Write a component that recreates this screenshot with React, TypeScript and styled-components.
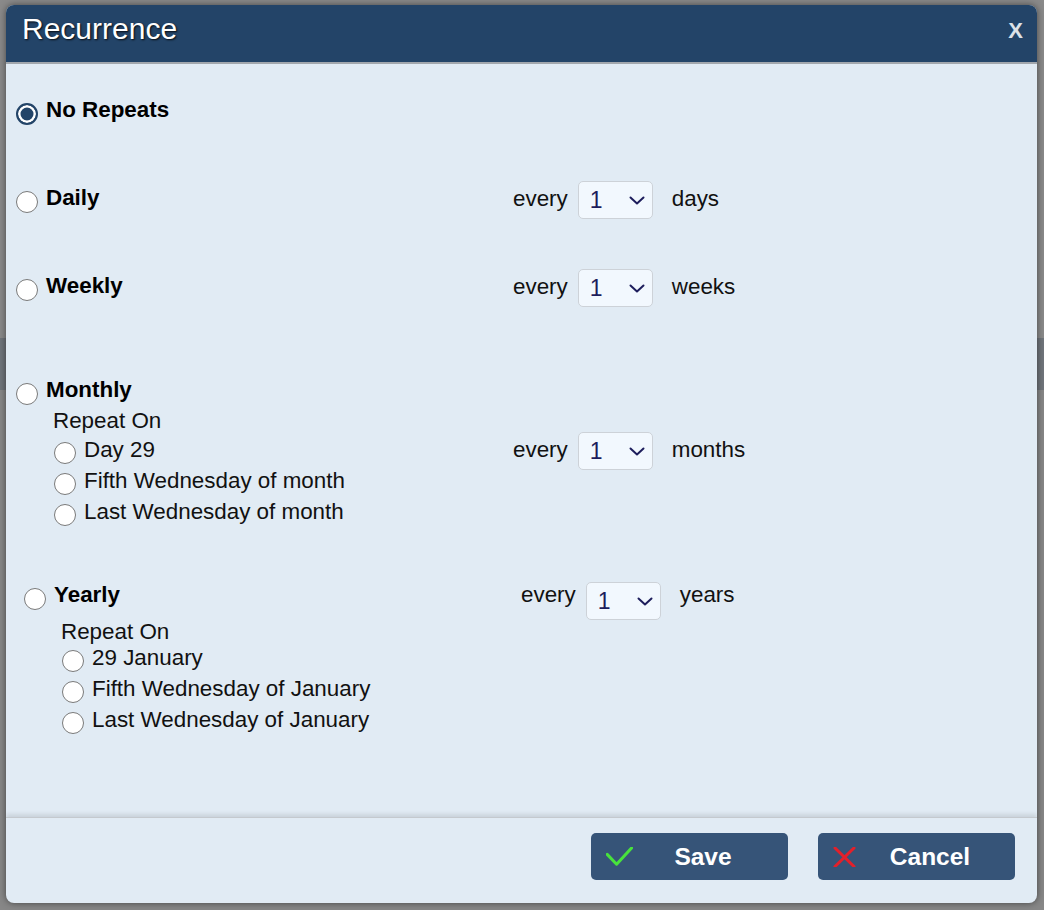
import React, { useState } from 'react';
import styled, { createGlobalStyle } from 'styled-components';

const GlobalStyle = createGlobalStyle`
  html, body {
    margin: 0;
    padding: 0;
  }
  body {
    font-family: 'Liberation Sans', Arial, sans-serif;
  }
`;

type Freq = 'none' | 'daily' | 'weekly' | 'monthly' | 'yearly';

const counts = Array.from({ length: 30 }, (_, i) => i + 1);

export default function App() {
  const [freq, setFreq] = useState<Freq>('none');
  const [monthRule, setMonthRule] = useState<string>('');
  const [yearRule, setYearRule] = useState<string>('');
  const [every, setEvery] = useState({ daily: 1, weekly: 1, monthly: 1, yearly: 1 });

  const setCount = (key: keyof typeof every) => (e: React.ChangeEvent<HTMLSelectElement>) => {
    setEvery({ ...every, [key]: Number(e.target.value) });
  };

  // "every [n] unit" block on the right of each option
  const EveryBox = (key: keyof typeof every, unit: string, top: number, word: number) => (
    <RightCol $top={top} $word={word}>
      <Word>every</Word>
      <SelectWrap>
        <CountSelect value={every[key]} onChange={setCount(key)}>
          {counts.map((n) => (
            <option key={n} value={n}>{n}</option>
          ))}
        </CountSelect>
        <Chevron width="16" height="9" viewBox="0 0 16 9">
          <path d="M1.5 1.5 L8 7.5 L14.5 1.5" fill="none" stroke="#1d1d5c" strokeWidth="2" strokeLinecap="round" strokeLinejoin="round" />
        </Chevron>
      </SelectWrap>
      <Word>{unit}</Word>
    </RightCol>
  );

  return (
    <>
      <GlobalStyle />
      <Backdrop>
        <Dialog>
          <Header>
            <Title>Recurrence</Title>
            <Close>X</Close>
          </Header>

          <Body>
            <Section $top={0} $indent={0}>
              <LeftCol>
                <OptionHead>
                  <Radio name="freq" checked={freq === 'none'} onChange={() => setFreq('none')} />
                  <HeadLabel>No Repeats</HeadLabel>
                </OptionHead>
              </LeftCol>
            </Section>

            <Section $top={62} $indent={0}>
              <LeftCol>
                <OptionHead>
                  <Radio name="freq" checked={freq === 'daily'} onChange={() => setFreq('daily')} />
                  <HeadLabel>Daily</HeadLabel>
                </OptionHead>
              </LeftCol>
              {EveryBox('daily', 'days', -4, 5)}
            </Section>

            <Section $top={62} $indent={0}>
              <LeftCol>
                <OptionHead>
                  <Radio name="freq" checked={freq === 'weekly'} onChange={() => setFreq('weekly')} />
                  <HeadLabel>Weekly</HeadLabel>
                </OptionHead>
              </LeftCol>
              {EveryBox('weekly', 'weeks', -4, 5)}
            </Section>

            <Section $top={78} $indent={0}>
              <LeftCol>
                <OptionHead>
                  <Radio name="freq" checked={freq === 'monthly'} onChange={() => setFreq('monthly')} />
                  <HeadLabel>Monthly</HeadLabel>
                </OptionHead>
                <RepeatLabel $top={5}>Repeat On</RepeatLabel>
                <SubList $top={0}>
                  {['Day 29', 'Fifth Wednesday of month', 'Last Wednesday of month'].map((t) => (
                    <SubRow key={t}>
                      <Radio name="month" checked={monthRule === t} onChange={() => setMonthRule(t)} />
                      <SubLabel>{t}</SubLabel>
                    </SubRow>
                  ))}
                </SubList>
              </LeftCol>
              {EveryBox('monthly', 'months', 55, 5)}
            </Section>

            <Section $top={55} $indent={8}>
              <LeftCol>
                <OptionHead>
                  <Radio name="freq" checked={freq === 'yearly'} onChange={() => setFreq('yearly')} />
                  <HeadLabel>Yearly</HeadLabel>
                </OptionHead>
                <RepeatLabel $top={11}>Repeat On</RepeatLabel>
                <SubList $top={-3}>
                  {['29 January', 'Fifth Wednesday of January', 'Last Wednesday of January'].map((t) => (
                    <SubRow key={t}>
                      <Radio name="year" checked={yearRule === t} onChange={() => setYearRule(t)} />
                      <SubLabel>{t}</SubLabel>
                    </SubRow>
                  ))}
                </SubList>
              </LeftCol>
              {EveryBox('yearly', 'years', 0, 0)}
            </Section>
          </Body>

          <Footer>
            <ActionButton>
              <IconBox>
                <svg width="27" height="20" viewBox="0 0 27 20">
                  <path d="M1.2 7.4 L10.6 17.2 L25.6 0.9" fill="none" stroke="#48e23c" strokeWidth="3" strokeLinecap="round" strokeLinejoin="round" />
                </svg>
              </IconBox>
              <ButtonText>Save</ButtonText>
            </ActionButton>
            <ActionButton>
              <IconBox>
                <svg width="27" height="20" viewBox="0 0 27 20">
                  <path d="M2 1 L21 19.5 M21 1 L2 19.5" fill="none" stroke="#e3202a" strokeWidth="3" strokeLinecap="round" />
                </svg>
              </IconBox>
              <ButtonText>Cancel</ButtonText>
            </ActionButton>
          </Footer>
        </Dialog>
      </Backdrop>
    </>
  );
}

const Backdrop = styled.div`
  width: 1044px;
  height: 910px;
  box-sizing: border-box;
  padding: 5px 7px 7px 6px;
  background: linear-gradient(
    to bottom,
    #8a8a8a 0,
    #8a8a8a 338px,
    #70757b 338px,
    #70757b 390px,
    #878787 390px
  );
`;

const Dialog = styled.div`
  height: 898px;
  display: flex;
  flex-direction: column;
  background: #e1ebf4;
  border-radius: 8px;
  overflow: hidden;
  box-shadow: 0 0 7px rgba(0, 0, 0, 0.5);
`;

const Header = styled.div`
  height: 59px;
  flex: none;
  display: flex;
  justify-content: space-between;
  align-items: flex-start;
  padding: 7px 14px 0 16px;
  box-sizing: border-box;
  background: #234468;
  border-bottom: 2px solid #a2a7ad;
`;

const Title = styled.div`
  font-size: 30px;
  color: #ffffff;
  text-shadow: 1px 1px 2px rgba(0, 0, 0, 0.85);
`;

const Close = styled.div`
  margin-top: 6px;
  font-size: 22px;
  font-weight: bold;
  color: #dce1e7;
  cursor: pointer;
`;

const Body = styled.div`
  flex: 1;
  padding: 33px 0 0 10px;
`;

const Section = styled.div<{ $top: number; $indent: number }>`
  display: grid;
  grid-template-columns: 497px auto;
  align-items: start;
  margin-top: ${(p) => p.$top}px;
  padding-left: ${(p) => p.$indent}px;
`;

const LeftCol = styled.div`
  display: flex;
  flex-direction: column;
`;

const OptionHead = styled.label`
  display: flex;
  align-items: flex-start;
  gap: 8px;
  height: 26px;
`;

const Radio = styled.input.attrs({ type: 'radio' })`
  appearance: none;
  -webkit-appearance: none;
  flex: none;
  width: 22px;
  height: 22px;
  margin: 6px 0 0 0;
  box-sizing: border-box;
  border-radius: 50%;
  border: 1.5px solid #7a7a7a;
  background: #ffffff;
  cursor: pointer;

  &:checked {
    border: 2px solid #234468;
    background: #234468;
    box-shadow: inset 0 0 0 2.5px #ffffff;
  }
`;

const HeadLabel = styled.span`
  font-size: 22.4px;
  line-height: 26px;
  font-weight: bold;
  color: #000000;
`;

const RepeatLabel = styled.div<{ $top: number }>`
  margin-top: ${(p) => p.$top}px;
  padding-left: 37px;
  font-size: 22.4px;
  line-height: 26px;
  color: #111111;
`;

const SubList = styled.div<{ $top: number }>`
  margin-top: ${(p) => p.$top}px;
  padding-left: 38px;
  display: flex;
  flex-direction: column;
`;

const SubRow = styled.label`
  display: flex;
  align-items: flex-start;
  gap: 8px;
  height: 31px;

  & > input {
    margin-top: 8px;
  }
`;

const SubLabel = styled.span`
  font-size: 22.4px;
  line-height: 31px;
  color: #111111;
`;

const RightCol = styled.div<{ $top: number; $word: number }>`
  display: flex;
  align-items: flex-start;
  height: 26px;
  margin-top: ${(p) => p.$top}px;

  & > span {
    margin-top: ${(p) => p.$word}px;
  }
`;

const Word = styled.span`
  font-size: 22.4px;
  line-height: 26px;
  color: #111111;
`;

const SelectWrap = styled.div`
  position: relative;
  margin: 0 19px 0 10px;
`;

const CountSelect = styled.select`
  appearance: none;
  -webkit-appearance: none;
  width: 75px;
  height: 38px;
  box-sizing: border-box;
  padding: 0 0 1px 11px;
  font-family: 'Liberation Sans', Arial, sans-serif;
  font-size: 23px;
  color: #1d1d5c;
  background: #f2f8fe;
  border: 1px solid #cdd2d8;
  border-radius: 5px;
  outline: none;
  cursor: pointer;
`;

const Chevron = styled.svg`
  position: absolute;
  right: 8px;
  top: 15px;
  pointer-events: none;
`;

const Footer = styled.div`
  height: 86px;
  flex: none;
  box-sizing: border-box;
  display: flex;
  justify-content: flex-end;
  align-items: flex-start;
  gap: 30px;
  padding: 15px 22px 0 0;
  border-top: 1px solid #c4c9ce;
  box-shadow: 0 -3px 4px rgba(0, 0, 0, 0.1);
`;

const ActionButton = styled.button`
  width: 197px;
  height: 47px;
  display: flex;
  align-items: center;
  padding: 0 15px;
  box-sizing: border-box;
  border: none;
  border-radius: 5px;
  background: #365478;
  cursor: pointer;
`;

const IconBox = styled.span`
  flex: none;
  width: 27px;
  height: 20px;
  display: flex;
`;

const ButtonText = styled.span`
  flex: 1;
  text-align: center;
  font-family: 'Liberation Sans', Arial, sans-serif;
  font-size: 24.5px;
  font-weight: bold;
  color: #ffffff;
`;
